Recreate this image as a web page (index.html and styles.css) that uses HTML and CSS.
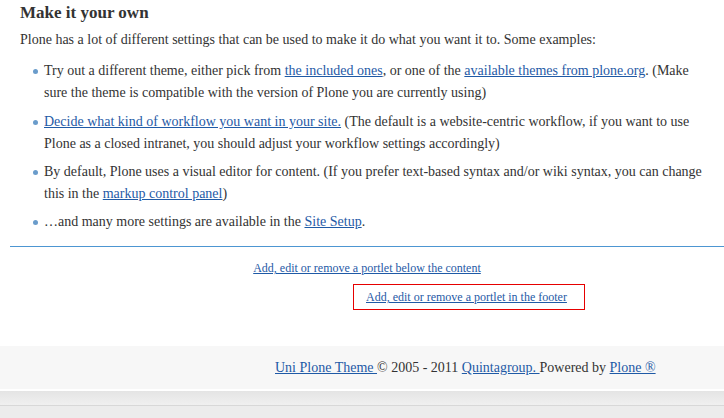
FILE: index.html
```html
<!DOCTYPE html>
<html lang="en">
<head>
    <meta charset="UTF-8">
    <title>Make it your own</title>
    <link rel="stylesheet" href="styles.css">
</head>
<body>
    <div class="content">
        <h2>Make it your own</h2>
        <p>Plone has a lot of different settings that can be used to make it do what you want it to. Some examples:</p>
        <ul>
            <li>Try out a different theme, either pick from <a href="#">the included ones</a>, or one of the <a href="#">available themes from plone.org</a>. (Make sure the theme is compatible with the version of Plone you are currently using)</li>
            <li><a href="#">Decide what kind of workflow you want in your site.</a> (The default is a website-centric workflow, if you want to use Plone as a closed intranet, you should adjust your workflow settings accordingly)</li>
            <li>By default, Plone uses a visual editor for content. (If you prefer text-based syntax and/or wiki syntax, you can change this in the <a href="#">markup control panel</a>)</li>
            <li>&hellip;and many more settings are available in the <a href="#">Site Setup</a>.</li>
        </ul>
    </div>
    <div class="below">
        <div class="manage"><a href="#">Add, edit or remove a portlet below the content</a></div>
        <div class="manage-footer"><a href="#">Add, edit or remove a portlet in the footer</a></div>
    </div>
    <div class="footer">
        <a href="#">Uni Plone Theme </a>&copy; 2005 - 2011 <a href="#">Quintagroup. </a>Powered by <a href="#">Plone &reg;</a>
    </div>
    <div class="page-bottom"></div>
</body>
</html>
```

FILE: styles.css
```css
body {
    margin: 0;
    font-family: "Liberation Serif", "DejaVu Serif", serif;
    font-size: 14px;
    color: #333;
    background-color: #ececec;
}
a {
    color: #1f5aa6;
}
.content {
    background-color: white;
    padding: 2px 20px 0 20px;
}
h2 {
    font-size: 17px;
    margin: 0 0 5px 0;
    line-height: 22px;
}
p {
    margin: 0 0 9px 0;
    line-height: 22px;
}
ul {
    margin: 0;
    padding: 0 0 7px 24px;
    list-style: none;
}
li {
    position: relative;
    line-height: 22px;
    margin-bottom: 6px;
}
li:first-child {
    margin-bottom: 7px;
}
li::before {
    content: "";
    position: absolute;
    left: -11px;
    top: 9px;
    width: 5px;
    height: 5px;
    border-radius: 50%;
    background-color: #6a9ccb;
}
.below {
    background-color: white;
    padding: 0 0 36px 10px;
}
.manage {
    border-top: 1px solid #4d96d2;
    text-align: center;
    font-size: 12px;
    padding-top: 13px;
    line-height: 16px;
}
.manage-footer {
    width: 232px;
    margin: 8px 0 0 343px;
    border: 1px solid #e60000;
    font-size: 12px;
    line-height: 24px;
    padding-left: 12px;
    box-sizing: border-box;
}
.footer {
    background-color: #f7f7f7;
    height: 43px;
    padding-left: 275px;
    line-height: 43px;
    font-size: 14px;
    border-bottom: 2px solid white;
    box-shadow: 0 2px 2px rgba(0,0,0,0.35);
}
.page-bottom {
    height: 14px;
    background: linear-gradient(#e4e4e4, #f0f0f0);
    border-bottom: 1px solid #d8d8d8;
}
```
